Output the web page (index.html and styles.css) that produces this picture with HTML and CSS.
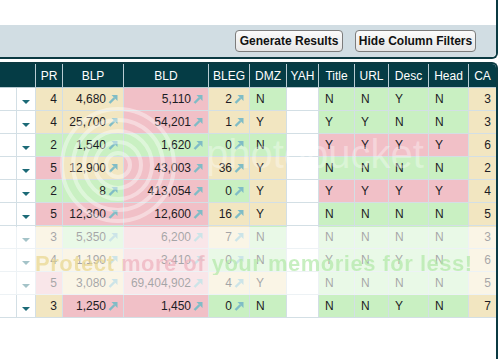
FILE: index.html
```html
<!DOCTYPE html>
<html>
<head>
<meta charset="utf-8">
<link rel="stylesheet" href="styles.css">
</head>
<body>
<svg width="0" height="0" class="defs">
  <symbol id="arr" viewBox="0 0 10 10">
    <path d="M1.5 9 L6.5 4" stroke="currentColor" stroke-width="2.4" fill="none"/>
    <polygon points="3.5,1 9.5,1 9.5,7" fill="currentColor"/>
  </symbol>
  <symbol id="dd" viewBox="0 0 8 4">
    <polygon points="0,0 8,0 4,4" fill="currentColor"/>
  </symbol>
</svg>
<div class="top">
  <div class="top-white"></div>
  <div class="toolbar">
    <button class="btn btn-gen">Generate Results</button>
    <button class="btn btn-hide">Hide Column Filters</button>
  </div>
</div>
<div class="grid-wrap">
  <table class="grid">
    <colgroup>
      <col class="c-a"><col class="c-b"><col class="c-pr"><col class="c-blp"><col class="c-bld"><col class="c-bleg"><col class="c-dmz"><col class="c-yah"><col class="c-title"><col class="c-url"><col class="c-desc"><col class="c-head"><col class="c-ca">
    </colgroup>
    <thead>
      <tr><th colspan="2"></th><th>PR</th><th>BLP</th><th>BLD</th><th>BLEG</th><th>DMZ</th><th>YAH</th><th>Title</th><th>URL</th><th>Desc</th><th>Head</th><th>CA</th></tr>
    </thead>
    <tbody>
      <tr><td></td><td class="ddc"><svg class="dd"><use href="#dd"/></svg></td><td class="n y">4</td><td class="n y">4,680<svg class="ar"><use href="#arr"/></svg></td><td class="n r">5,110<svg class="ar"><use href="#arr"/></svg></td><td class="n y">2<svg class="ar"><use href="#arr"/></svg></td><td class="t g">N</td><td></td><td class="t g">N</td><td class="t g">N</td><td class="t g">Y</td><td class="t g">N</td><td class="n y">3</td></tr>
      <tr><td></td><td class="ddc"><svg class="dd"><use href="#dd"/></svg></td><td class="n y">4</td><td class="n y">25,700<svg class="ar"><use href="#arr"/></svg></td><td class="n r">54,201<svg class="ar"><use href="#arr"/></svg></td><td class="n y">1<svg class="ar"><use href="#arr"/></svg></td><td class="t y">Y</td><td></td><td class="t g">Y</td><td class="t g">Y</td><td class="t g">N</td><td class="t g">N</td><td class="n y">3</td></tr>
      <tr><td></td><td class="ddc"><svg class="dd"><use href="#dd"/></svg></td><td class="n g">2</td><td class="n g">1,540<svg class="ar"><use href="#arr"/></svg></td><td class="n g">1,620<svg class="ar"><use href="#arr"/></svg></td><td class="n g">0<svg class="ar"><use href="#arr"/></svg></td><td class="t g">N</td><td></td><td class="t r">Y</td><td class="t r">Y</td><td class="t r">Y</td><td class="t r">Y</td><td class="n y">6</td></tr>
      <tr><td></td><td class="ddc"><svg class="dd"><use href="#dd"/></svg></td><td class="n r">5</td><td class="n y">12,900<svg class="ar"><use href="#arr"/></svg></td><td class="n r">43,003<svg class="ar"><use href="#arr"/></svg></td><td class="n y">36<svg class="ar"><use href="#arr"/></svg></td><td class="t y">Y</td><td></td><td class="t g">N</td><td class="t g">N</td><td class="t g">N</td><td class="t g">N</td><td class="n y">2</td></tr>
      <tr><td></td><td class="ddc"><svg class="dd"><use href="#dd"/></svg></td><td class="n g">2</td><td class="n g">8<svg class="ar"><use href="#arr"/></svg></td><td class="n r">413,054<svg class="ar"><use href="#arr"/></svg></td><td class="n g">0<svg class="ar"><use href="#arr"/></svg></td><td class="t y">Y</td><td></td><td class="t r">Y</td><td class="t r">Y</td><td class="t r">Y</td><td class="t r">Y</td><td class="n y">4</td></tr>
      <tr><td></td><td class="ddc"><svg class="dd"><use href="#dd"/></svg></td><td class="n r">5</td><td class="n r">12,300<svg class="ar"><use href="#arr"/></svg></td><td class="n r">12,600<svg class="ar"><use href="#arr"/></svg></td><td class="n y">16<svg class="ar"><use href="#arr"/></svg></td><td class="t y">Y</td><td></td><td class="t g">N</td><td class="t g">N</td><td class="t g">N</td><td class="t g">N</td><td class="n y">5</td></tr>
      <tr><td></td><td class="ddc"><svg class="dd"><use href="#dd"/></svg></td><td class="n y">3</td><td class="n g">5,350<svg class="ar"><use href="#arr"/></svg></td><td class="n r">6,200<svg class="ar"><use href="#arr"/></svg></td><td class="n y">7<svg class="ar"><use href="#arr"/></svg></td><td class="t g">N</td><td></td><td class="t g">N</td><td class="t g">N</td><td class="t g">N</td><td class="t g">N</td><td class="n y">3</td></tr>
      <tr><td></td><td class="ddc"><svg class="dd"><use href="#dd"/></svg></td><td class="n y">4</td><td class="n y">1,190<svg class="ar"><use href="#arr"/></svg></td><td class="n r">3,410<svg class="ar"><use href="#arr"/></svg></td><td class="n g">0<svg class="ar"><use href="#arr"/></svg></td><td class="t g">N</td><td></td><td class="t g">Y</td><td class="t g">N</td><td class="t g">Y</td><td class="t g">N</td><td class="n y">6</td></tr>
      <tr><td></td><td class="ddc"><svg class="dd"><use href="#dd"/></svg></td><td class="n r">5</td><td class="n y">3,080<svg class="ar"><use href="#arr"/></svg></td><td class="n r">69,404,902<svg class="ar"><use href="#arr"/></svg></td><td class="n y">4<svg class="ar"><use href="#arr"/></svg></td><td class="t y">Y</td><td></td><td class="t g">N</td><td class="t g">N</td><td class="t g">N</td><td class="t g">N</td><td class="n y">5</td></tr>
      <tr><td></td><td class="ddc"><svg class="dd"><use href="#dd"/></svg></td><td class="n y">3</td><td class="n r">1,250<svg class="ar"><use href="#arr"/></svg></td><td class="n r">1,450<svg class="ar"><use href="#arr"/></svg></td><td class="n g">0<svg class="ar"><use href="#arr"/></svg></td><td class="t g">N</td><td></td><td class="t g">N</td><td class="t g">N</td><td class="t g">Y</td><td class="t g">N</td><td class="n y">7</td></tr>
    </tbody>
  </table>
  <div class="wm-rings">
    <svg width="120" height="120" viewBox="0 0 120 120">
      <circle cx="60" cy="60" r="12"/>
      <circle cx="60" cy="60" r="23"/>
      <circle cx="60" cy="60" r="34"/>
      <circle cx="60" cy="60" r="45"/>
      <circle cx="60" cy="60" r="56"/>
    </svg>
  </div>
  <div class="wm-logo">photobucket</div>
  <div class="wm-band"><span class="wm-text">Protect more of your memories for less!</span></div>
</div>
</body>
</html>
```
FILE: styles.css
```css
html, body {
  margin: 0;
  padding: 0;
  background: #ffffff;
}
body {
  font-family: "Liberation Sans", Arial, sans-serif;
  font-size: 12px;
  color: #1c1c24;
  width: 504px;
  height: 359px;
  overflow: hidden;
}
.defs {
  position: absolute;
}
.top {
  width: 496px;
  border-right: 2px solid #0b3a42;
  border-bottom: 2px solid #0b3a42;
  border-bottom-right-radius: 6px;
}
.top-white {
  height: 25px;
  background: #ffffff;
}
.toolbar {
  height: 32px;
  background: #d1dde3;
  display: flex;
  align-items: center;
  justify-content: flex-end;
  gap: 12px;
  padding-right: 20px;
  border-bottom-right-radius: 5px;
}
.btn {
  height: 22px;
  margin: 0;
  padding: 0;
  border: 1px solid #7c7c7c;
  border-radius: 4px;
  background: linear-gradient(#fbfbfb, #e6e6e6);
  font-family: "Liberation Sans", Arial, sans-serif;
  font-size: 12px;
  font-weight: bold;
  color: #111;
  white-space: nowrap;
  text-align: center;
}
.btn-gen {
  width: 108px;
}
.btn-hide {
  width: 121px;
}
.grid-wrap {
  position: relative;
  margin-top: 3px;
  width: 496px;
  height: 300px;
  border-top: 2px solid #0b3a42;
  border-right: 2px solid #0b3a42;
  border-top-right-radius: 6px;
  overflow: hidden;
}
.grid {
  border-collapse: collapse;
  table-layout: fixed;
  width: 497px;
  margin-left: -1px;
}
.c-a { width: 17px; }
.c-b { width: 19px; }
.c-pr { width: 27px; }
.c-blp { width: 61px; }
.c-bld { width: 85px; }
.c-bleg { width: 41px; }
.c-dmz { width: 37px; }
.c-yah { width: 32px; }
.c-title { width: 36px; }
.c-url { width: 34px; }
.c-desc { width: 40px; }
.c-head { width: 40px; }
.c-ca { width: 28px; }
.grid th {
  background: #053c45;
  color: #ffffff;
  font-weight: normal;
  font-size: 12px;
  height: 23px;
  padding: 0;
  text-align: center;
  border: 1px solid #b9ccd3;
  border-top: none;
}
.grid td {
  height: 22px;
  padding: 0;
  border: 1px solid #d3dfe5;
  white-space: nowrap;
  overflow: hidden;
}
.grid td.n {
  text-align: right;
  padding-right: 5px;
}
.grid td.t {
  text-align: left;
  padding-left: 6px;
}
.y { background: #f2e6c1; }
.r { background: #f1c0c7; }
.g { background: #c9f0c2; }
.ar {
  width: 10px;
  height: 10px;
  margin-left: 2px;
  color: #7fbcc6;
  vertical-align: -1px;
}
.ddc {
  text-align: center;
  vertical-align: bottom;
}
.dd {
  display: block;
  width: 8px;
  height: 4px;
  margin: 0 auto 6px;
  color: #1c6a77;
}
.wm-rings {
  position: absolute;
  left: 58px;
  top: 41px;
  width: 120px;
  height: 120px;
  pointer-events: none;
}
.wm-rings circle {
  fill: none;
  stroke: rgba(255, 255, 255, 0.4);
  stroke-width: 4;
}
.wm-logo {
  position: absolute;
  left: 206px;
  top: 70px;
  font-family: "Liberation Sans", Arial, sans-serif;
  font-size: 40px;
  line-height: 40px;
  color: rgba(255, 255, 255, 0.35);
  pointer-events: none;
}
.wm-band {
  position: absolute;
  left: 0;
  top: 163px;
  width: 100%;
  height: 68px;
  background: rgba(255, 255, 255, 0.6);
  pointer-events: none;
}
.wm-text {
  position: absolute;
  left: 35px;
  top: 26px;
  font-family: "Liberation Sans", Arial, sans-serif;
  font-weight: bold;
  font-size: 22px;
  line-height: 22px;
  letter-spacing: 0.5px;
  white-space: nowrap;
  background: linear-gradient(to right, rgba(232, 214, 140, 0.7) 0, rgba(232, 214, 140, 0.7) 88px, rgba(238, 176, 188, 0.7) 88px, rgba(238, 176, 188, 0.7) 173px, rgba(176, 232, 166, 0.7) 173px);
  -webkit-background-clip: text;
  background-clip: text;
  color: transparent;
}
```
